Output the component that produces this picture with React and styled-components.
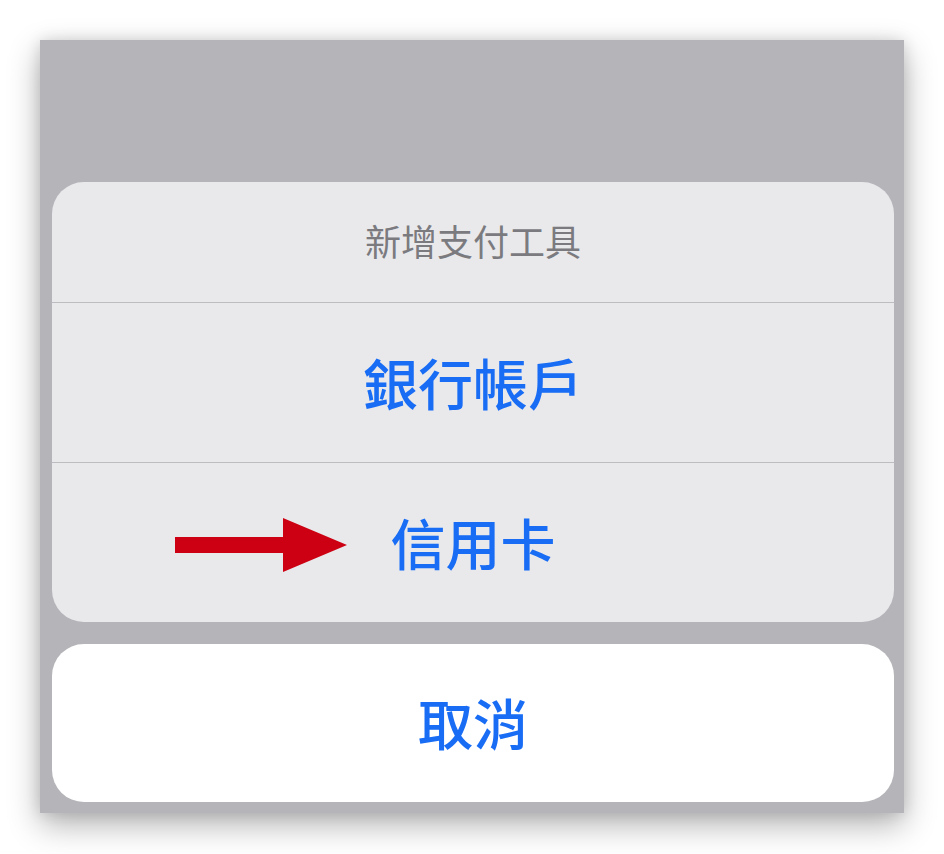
import React from "react";
import styled, { createGlobalStyle } from "styled-components";

const GlobalStyle = createGlobalStyle`
  body {
    margin: 0;
    background: #fff;
    font-family: "Noto Sans CJK TC", "Noto Sans", sans-serif;
  }
`;

const Page = styled.div`
  width: 944px;
  height: 854px;
  padding: 40px;
  box-sizing: border-box;
`;

const Screen = styled.div`
  width: 864px;
  height: 773px;
  background: #b5b4b9;
  box-shadow: 0 12px 30px rgba(0, 0, 0, 0.3), 0 0 14px rgba(0, 0, 0, 0.12);
  display: flex;
  flex-direction: column;
  justify-content: flex-end;
  gap: 22px;
  padding: 0 10px 11px 12px;
  box-sizing: border-box;
`;

const Sheet = styled.div`
  background: ${(p) => (p.$cancel ? "#ffffff" : "#e9e9ec")};
  border-radius: 32px;
  overflow: hidden;
  display: flex;
  flex-direction: column;
`;

const Title = styled.div`
  height: 121px;
  display: flex;
  align-items: center;
  justify-content: center;
  font-size: 36px;
  color: #7b7b7f;
  padding-bottom: 4px;
  box-sizing: border-box;
  border-bottom: 1px solid #bdbdc1;
`;

const Action = styled.div`
  position: relative;
  height: ${(p) => p.$h}px;
  display: flex;
  align-items: center;
  justify-content: center;
  font-size: 55px;
  font-weight: 500;
  color: #196df5;
  padding-bottom: 4px;
  box-sizing: border-box;
  border-bottom: ${(p) => (p.$divider ? "1px solid #bdbdc1" : "none")};
`;

const Arrow = styled.svg`
  position: absolute;
  left: 123px;
  top: 55px;
`;

export default function App() {
  return (
    <Page>
      <GlobalStyle />
      <Screen>
        <Sheet>
          <Title>新增支付工具</Title>
          <Action $h={160} $divider>銀行帳戶</Action>
          <Action $h={159}>
            <Arrow width="174" height="56" viewBox="0 0 174 56">
              <path d="M0 19 H108 V0 L172 27 L108 54 V35 H0 Z" fill="#cc0012" />
            </Arrow>
            信用卡
          </Action>
        </Sheet>
        <Sheet $cancel>
          <Action $h={158}>取消</Action>
        </Sheet>
      </Screen>
    </Page>
  );
}
